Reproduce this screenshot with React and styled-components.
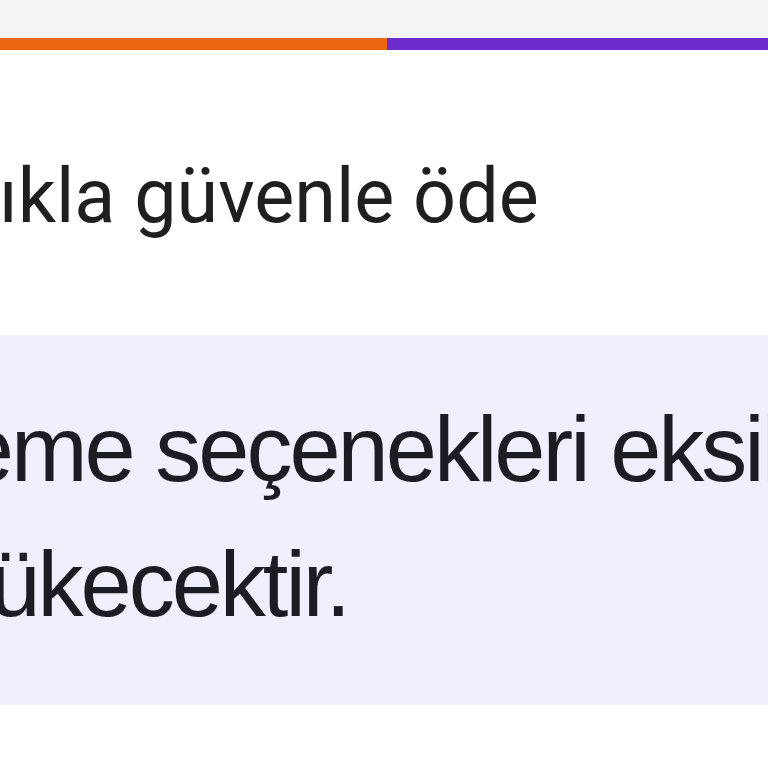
import React from 'react';
import styled, { createGlobalStyle } from 'styled-components';

const GlobalStyle = createGlobalStyle`
  html, body {
    margin: 0;
    padding: 0;
    background: #fff;
    overflow: hidden;
  }
`

const Page = styled.div`
  width: 768px;
  height: 768px;
  overflow: hidden;
  display: flex;
  flex-direction: column;
`

const TopStrip = styled.div`
  height: 38px;
  background: #f5f3f5;
`

const Progress = styled.div`
  display: flex;
  height: 12px;
`

const Segment = styled.div`
  flex: ${p => p.$grow};
  background: ${p => p.$color};
`

const Title = styled.div`
  height: 285px;
  padding-top: 109px;
  box-sizing: border-box;
  white-space: nowrap;
  font-family: Roboto, "Noto Sans", sans-serif;
  font-size: 75.5px;
  line-height: 1;
  color: #1f1f1f;
  margin-left: -46px;
`

const Notice = styled.div`
  background: #eff0fc;
  height: 370px;
  padding-top: 47px;
  box-sizing: border-box;
  font-family: "Liberation Sans", Arial, sans-serif;
  font-size: 92px;
  letter-spacing: -3px;
  line-height: 135px;
  color: #1c1c22;
  white-space: nowrap;
`

const Line = styled.div`
  margin-left: ${p => p.$shift}px;
`

export default function App() {
  return (
    <Page>
      <GlobalStyle />
      <TopStrip />
      <Progress>
        <Segment $grow={387} $color="#ee6512" />
        <Segment $grow={381} $color="#6e2ccc" />
      </Progress>
      <Title>Tıkla güvenle öde</Title>
      <Notice>
        <Line $shift={-154}>Ödeme seçenekleri eksiksiz</Line>
        <Line $shift={-150}>gözükecektir.</Line>
      </Notice>
    </Page>
  );
}
